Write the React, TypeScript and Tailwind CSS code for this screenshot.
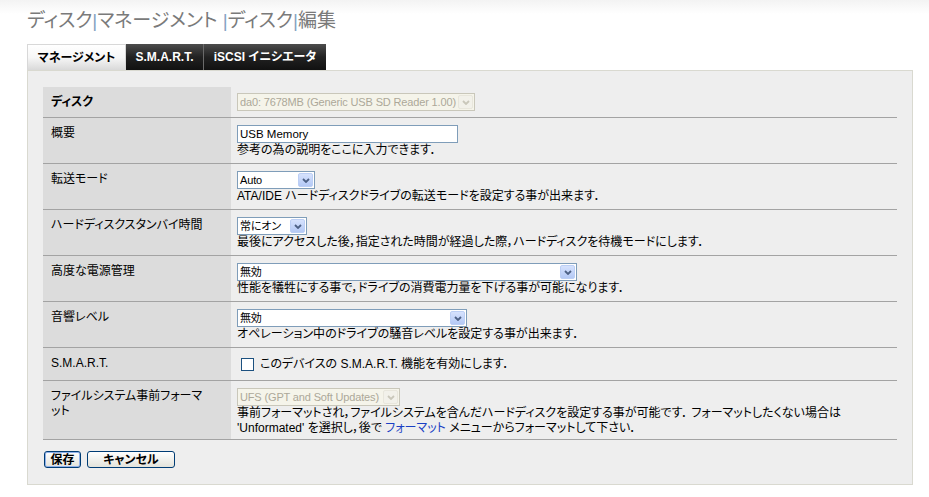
import clsx from "clsx";

const font = "font-['Liberation_Sans','Noto_Sans_CJK_JP',sans-serif] [font-feature-settings:'palt']";

function Chevron({ disabled }: { disabled?: boolean }) {
  return (
    <svg width="8" height="5" viewBox="0 0 8 5">
      <path
        d="M1 1 L4 4 L7 1"
        fill="none"
        stroke={disabled ? "#c9c7ba" : "#4d6185"}
        strokeWidth="1.8"
      />
    </svg>
  );
}

function FakeSelect({
  value,
  widthClass,
  disabled,
}: {
  value: string;
  widthClass: string;
  disabled?: boolean;
}) {
  return (
    <div
      className={clsx(
        "flex h-[18px] items-center border",
        widthClass,
        disabled
          ? "border-[#c9c7ba] bg-[#f5f4ea] text-[#aca899]"
          : "border-[#7f9db9] bg-white text-black"
      )}
    >
      <span className="min-w-0 flex-1 overflow-hidden whitespace-nowrap pl-[2px] text-[11px] leading-[16px] tracking-[-0.15px]">
        {value}
      </span>
      <span
        className={clsx(
          "m-px flex h-[14px] w-[15px] shrink-0 items-center justify-center rounded-[2px] border",
          disabled
            ? "border-[#e8e6dc] bg-[#f2f1ea]"
            : "border-[#bccff5] bg-gradient-to-b from-[#d6e2fd] to-[#b4c9f5]"
        )}
      >
        <Chevron disabled={disabled} />
      </span>
    </div>
  );
}

function Row({
  label,
  bold,
  children,
  valueClass,
}: {
  label: React.ReactNode;
  bold?: boolean;
  children: React.ReactNode;
  valueClass?: string;
}) {
  return (
    <div className="grid grid-cols-[188px_1fr] border-b border-[#a3a3a3]">
      <div
        className={clsx(
          "bg-[#dcdcdc] pl-[8px] pr-[6px] pt-[8px] text-[12px] leading-[15px] text-black",
          bold && "font-bold"
        )}
      >
        {label}
      </div>
      <div className={clsx("pl-[6px] text-[12px] leading-[15px] text-black", valueClass ?? "pt-[7px] pb-[5px]")}>
        {children}
      </div>
    </div>
  );
}

export default function App() {
  return (
    <div className={clsx("h-[497px] w-[929px] bg-[linear-gradient(#f3f3f3,#ffffff_14px)]", font)}>
      <div className="pl-[27px] pt-[9px]">
        <h1 className="text-[19px] leading-[24px] font-normal text-[#7a7a7a]">
          ディスク<span className="text-[#86a3c2]">|</span>マネージメント <span className="text-[#86a3c2]">|</span>ディスク
          <span className="text-[#86a3c2]">|</span>編集
        </h1>

        <div className="mt-[11px] flex h-[26px] items-stretch text-[12px] font-bold">
          <div className="flex w-[99px] items-center justify-center border border-b-0 border-[#d8d8d8] bg-gradient-to-b from-white via-[#f7f7f7] to-[#d9d9d9] text-black">
            マネージメント
          </div>
          <div className="flex w-[77px] items-center justify-center bg-gradient-to-b from-[#4d4d4d] via-[#222] to-[#111] text-white">
            S.M.A.R.T.
          </div>
          <div className="flex w-[123px] items-center justify-center border-l border-[#6a6a6a] bg-gradient-to-b from-[#4d4d4d] via-[#222] to-[#111] text-white">
            iSCSI イニシエータ
          </div>
        </div>

        <div className="w-[886px] border border-[#d9d9d0] bg-[#eeeeee] px-[15px] pt-[16px] pb-[16px]">
          <div>
            <Row label="ディスク" bold valueClass="pt-[6px] pb-[6px]">
              <FakeSelect value="da0: 7678MB (Generic USB SD Reader 1.00)" widthClass="w-[238px]" disabled />
            </Row>
            <Row label="概要">
              <div className="flex h-[18px] w-[221px] items-center border border-[#7f9db9] bg-white pl-[2px] text-[11.5px]">
                USB Memory
              </div>
              <div>参考の為の説明をここに入力できます．</div>
            </Row>
            <Row label="転送モード">
              <FakeSelect value="Auto" widthClass="w-[78px]" />
              <div>ATA/IDE ハードディスクドライブの転送モードを設定する事が出来ます．</div>
            </Row>
            <Row label="ハードディスクスタンバイ時間">
              <FakeSelect value="常にオン" widthClass="w-[70px]" />
              <div>最後にアクセスした後，指定された時間が経過した際，ハードディスクを待機モードにします．</div>
            </Row>
            <Row label="高度な電源管理">
              <FakeSelect value="無効" widthClass="w-[340px]" />
              <div>性能を犠牲にする事で，ドライブの消費電力量を下げる事が可能になります．</div>
            </Row>
            <Row label="音響レベル">
              <FakeSelect value="無効" widthClass="w-[230px]" />
              <div>オペレーション中のドライブの騒音レベルを設定する事が出来ます．</div>
            </Row>
            <Row label="S.M.A.R.T." valueClass="pt-[9px] pb-[8px]">
              <div className="flex items-center gap-[6px] pl-[4px]">
                <span className="h-[13px] w-[13px] border border-[#1c5180] bg-white" />
                <span>このデバイスの S.M.A.R.T. 機能を有効にします．</span>
              </div>
            </Row>
            <Row
              label={
                <>
                  ファイルシステム事前フォーマ
                  <br />
                  ット
                </>
              }
              valueClass="pt-[7px] pb-[3px]"
            >
              <FakeSelect value="UFS (GPT and Soft Updates)" widthClass="w-[163px]" disabled />
              <div className="whitespace-nowrap">
                事前フォーマットされ，ファイルシステムを含んだハードディスクを設定する事が可能です． フォーマットしたくない場合は
                <br />
                'Unformated' を選択し，後で <span className="text-[#1a3fc4]">フォーマット</span> メニューからフォーマットして下さい．
              </div>
            </Row>
          </div>

          <div className="mt-[11px] flex gap-[6px] pl-[1px] text-[12px] font-bold">
            <button className="flex h-[17px] w-[37px] items-center justify-center rounded-[3px] border border-[#003c74] bg-gradient-to-b from-white to-[#e3e3db] leading-none shadow-[inset_0_0_0_1px_#8fb0ea]">
              保存
            </button>
            <button className="flex h-[17px] w-[88px] items-center justify-center rounded-[3px] border border-[#003c74] bg-gradient-to-b from-white to-[#e3e3db] leading-none">
              キャンセル
            </button>
          </div>
        </div>
      </div>
    </div>
  );
}
